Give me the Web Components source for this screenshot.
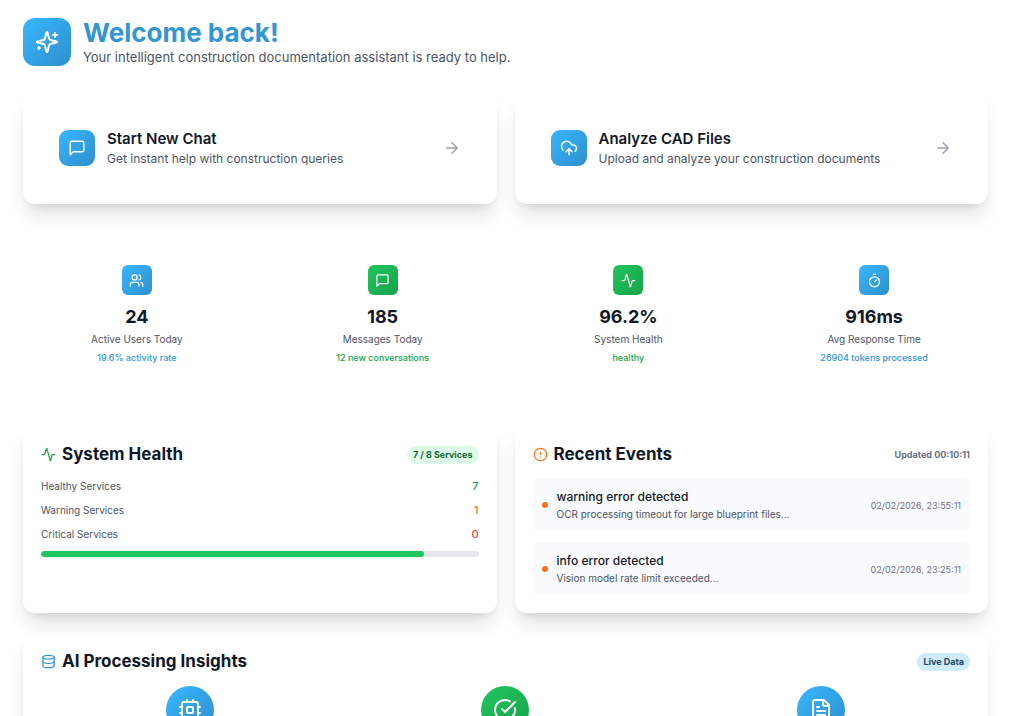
<!DOCTYPE html>
<html lang="en">
<head>
<meta charset="utf-8">
<meta name="viewport" content="width=device-width, initial-scale=1">
<title>Dashboard</title>
<style>
:root {
  --blue-a: #38b6ff; --blue-b: #2e8fcb; --blue: #3296d2;
  --green-a: #22c55e; --green-b: #16a34a;
  --ink: #111827; --muted: #4b5563; --soft: #6b7280; --faint: #9ca3af;
  --orange: #f97316; --red: #ef4444;
}
html { scrollbar-width: none; }
body { margin: 0; background: #fff; color: var(--ink); font-family: Inter, "Liberation Sans", sans-serif; }
</style>
</head>
<body>
<dashboard-page></dashboard-page>
<script>
const ICONS = {
  sparkles: '<path d="M9.937 15.5A2 2 0 0 0 8.5 14.063l-6.135-1.582a.5.5 0 0 1 0-.962L8.5 9.936A2 2 0 0 0 9.937 8.5l1.582-6.135a.5.5 0 0 1 .963 0L14.063 8.5A2 2 0 0 0 15.5 9.937l6.135 1.581a.5.5 0 0 1 0 .964L15.5 14.063a2 2 0 0 0-1.437 1.437l-1.582 6.135a.5.5 0 0 1-.963 0z"/><path d="M20 3v4M22 5h-4M4 17v2M5 18H3"/>',
  message: '<path d="M21 15a2 2 0 0 1-2 2H7l-4 4V5a2 2 0 0 1 2-2h14a2 2 0 0 1 2 2z"/>',
  upload: '<path d="M12 13v8"/><path d="M4 14.899A7 7 0 1 1 15.710 8h1.790a4.500 4.500 0 0 1 2.500 8.242"/><path d="m8 17 4-4 4 4"/>',
  arrow: '<path d="M5 12h14M12 5l7 7-7 7"/>',
  users: '<path d="M16 21v-2a4 4 0 0 0-4-4H6a4 4 0 0 0-4 4v2"/><circle cx="9" cy="7" r="4"/><path d="M22 21v-2a4 4 0 0 0-3-3.870M16 3.130a4 4 0 0 1 0 7.750"/>',
  activity: '<path d="M22 12h-2.480a2 2 0 0 0-1.930 1.460l-2.350 8.360a.25.25 0 0 1-.48 0L9.240 2.180a.25.25 0 0 0-.48 0l-2.350 8.360A2 2 0 0 1 4.490 12H2"/>',
  timer: '<path d="M10 2h4M12 14l3-3"/><circle cx="12" cy="14" r="8"/>',
  alert: '<circle cx="12" cy="12" r="10"/><path d="M12 8v4M12 16h.01"/>',
  database: '<ellipse cx="12" cy="5" rx="9" ry="3"/><path d="M3 5v14a9 3 0 0 0 18 0V5"/><path d="M3 12a9 3 0 0 0 18 0"/>',
  cpu: '<rect x="4" y="4" width="16" height="16" rx="2"/><rect x="9" y="9" width="6" height="6" rx="1"/><path d="M15 2v2M15 20v2M2 15h2M2 9h2M20 15h2M20 9h2M9 2v2M9 20v2"/>',
  check: '<path d="M21.801 10A10 10 0 1 1 17 3.335"/><path d="m9 11 3 3L22 4"/>',
  file: '<path d="M15 2H6a2 2 0 0 0-2 2v16a2 2 0 0 0 2 2h12a2 2 0 0 0 2-2V7Z"/><path d="M14 2v4a2 2 0 0 0 2 2h4M10 9H8M16 13H8M16 17H8"/>'
};

class Base extends HTMLElement {
  connectedCallback() {
    if (this.shadowRoot) return;
    this.attachShadow({ mode: 'open' }).innerHTML =
      '<style>*{box-sizing:border-box}:host{box-sizing:border-box}' + this.css() + '</style>' + this.html();
  }
  at(name) { return this.getAttribute(name) || ''; }
}

customElements.define('ui-icon', class extends Base {
  css() { return `:host{display:block;flex:none;width:var(--icon,18px);height:var(--icon,18px)}svg{display:block;width:100%;height:100%}`; }
  html() { return `<svg viewBox="0 0 24 24" fill="none" stroke="currentColor" stroke-width="2" stroke-linecap="round" stroke-linejoin="round" aria-hidden="true">${ICONS[this.at('name')]}</svg>`; }
});

customElements.define('icon-tile', class extends Base {
  css() { return `
    :host{display:grid;place-items:center;flex:none;width:var(--tile,36px);height:var(--tile,36px);border-radius:var(--tile-radius,9px);
      color:#fff;background:linear-gradient(135deg,var(--blue-a),var(--blue-b))}
    :host([tone=green]){background:linear-gradient(135deg,var(--green-a),var(--green-b))}`; }
  html() { return `<ui-icon name="${this.at('icon')}"></ui-icon>`; }
});

customElements.define('page-header', class extends Base {
  css() { return `
    :host{display:flex;align-items:center;gap:12px}
    icon-tile{--tile:48px;--tile-radius:12px;--icon:24px}
    h1{margin:0;font-size:26px;line-height:30px;font-weight:700;color:var(--blue)}
    p{margin:0;font-size:13px;line-height:18px;color:var(--muted)}`; }
  html() { return `<icon-tile icon="sparkles"></icon-tile><div><h1><slot name="title"></slot></h1><p><slot></slot></p></div>`; }
});

customElements.define('ui-card', class extends Base {
  css() { return `
    :host{display:block;padding:18px;border-radius:12px;background:#fff;
      box-shadow:0 15px 19px -4px rgb(0 0 0/.1),0 6px 8px -5px rgb(0 0 0/.1),0 12px 24px rgb(0 0 0/.02)}`; }
  html() { return `<slot></slot>`; }
});

customElements.define('action-card', class extends Base {
  css() { return `
    :host{display:block}
    a{display:flex;align-items:center;gap:12px;padding:18px;color:inherit;text-decoration:none}
    div{flex:1;min-width:0}
    h2{margin:0;font-size:15px;line-height:21px;font-weight:600}
    p{margin:0;font-size:12px;line-height:19px;color:var(--muted)}
    ui-icon{color:var(--faint)}`; }
  html() { return `<ui-card><a href="${this.at('href')}"><icon-tile icon="${this.at('icon')}"></icon-tile>
    <div><h2><slot name="title"></slot></h2><p><slot></slot></p></div><ui-icon name="arrow"></ui-icon></a></ui-card>`; }
});

customElements.define('stat-tile', class extends Base {
  css() { return `
    :host{display:flex;flex-direction:column;align-items:center;text-align:center;padding:36px 18px}
    icon-tile{--tile:30px;--tile-radius:6px;--icon:15px;margin-bottom:9px}
    strong{font-size:18px;line-height:26px;font-weight:700}
    span{font-size:10px;line-height:18px;color:var(--muted)}
    small{font-size:9px;line-height:20px;font-weight:500;color:var(--blue)}
    :host([tone=green]) small{color:var(--green-b)}`; }
  html() { return `<icon-tile icon="${this.at('icon')}" tone="${this.at('tone')}"></icon-tile>
    <strong>${this.at('value')}</strong><span>${this.at('label')}</span><small><slot></slot></small>`; }
});

customElements.define('card-header', class extends Base {
  css() { return `
    :host{display:flex;align-items:center;gap:6px;height:25px;margin-bottom:12px}
    ui-icon{--icon:15px}
    h2{margin:0;flex:1;font-size:17px;line-height:25px;font-weight:700}`; }
  html() { return `<ui-icon name="${this.at('icon')}" style="color:var(--${this.at('color')})"></ui-icon><h2><slot></slot></h2><slot name="aside"></slot>`; }
});

customElements.define('ui-badge', class extends Base {
  css() { return `
    :host{display:block;padding:0 6px;border-radius:9px;font-size:9px;line-height:18px;font-weight:700;background:#d0ebff;color:#1b4965}
    :host([tone=green]){background:#dcfce7;color:#166534}
    :host([tone=plain]){padding:0;background:none;color:var(--soft)}`; }
  html() { return `<slot></slot>`; }
});

customElements.define('service-list', class extends Base {
  css() { return `
    :host{display:block}
    dl{display:grid;gap:9px;margin:0 0 9px}
    div.row{display:flex;justify-content:space-between;font-size:10px;line-height:15px}
    dt{color:var(--muted)}
    dd{margin:0;font-size:11px;font-weight:500}
    .ok{color:var(--green-b)}.warn{color:var(--orange)}.bad{color:var(--red)}
    .track{height:6px;border-radius:3px;background:#e5e7eb;overflow:hidden}
    .bar{width:87.5%;height:100%;border-radius:3px;background:var(--green-a)}`; }
  html() { return `<dl>
    <div class="row"><dt>Healthy Services</dt><dd class="ok">7</dd></div>
    <div class="row"><dt>Warning Services</dt><dd class="warn">1</dd></div>
    <div class="row"><dt>Critical Services</dt><dd class="bad">0</dd></div></dl>
    <div class="track" role="progressbar" aria-label="Healthy services" aria-valuenow="7" aria-valuemax="8"><div class="bar"></div></div>`; }
});

customElements.define('event-item', class extends Base {
  css() { return `
    :host{display:flex;align-items:center;gap:9px;height:52px;padding:0 9px;border-radius:6px;background:#f9fafb}
    i{flex:none;width:6px;height:6px;border-radius:50%;background:var(--orange)}
    div{flex:1;min-width:0}
    h3{margin:0;font-size:12px;line-height:18px;font-weight:500}
    p{margin:0;font-size:10px;line-height:17px;color:var(--muted)}
    time{font-size:9px;color:var(--soft)}`; }
  html() { return `<i></i><div><h3>${this.at('heading')}</h3><p><slot></slot></p></div><time>${this.at('time')}</time>`; }
});

customElements.define('dashboard-page', class extends Base {
  css() { return `
    :host{display:block;padding:18px 36px 24px 23px}
    page-header{margin-bottom:26px}
    .two,.four,.three{display:grid;gap:18px}
    .two{grid-template-columns:repeat(2,minmax(0,1fr))}
    .three{grid-template-columns:repeat(3,minmax(0,1fr));justify-items:center}
    .four{grid-template-columns:repeat(4,minmax(0,1fr));margin:25px 0 20px}
    .events{display:grid;gap:12px}
    .insights{margin-top:18px}
    .three icon-tile{--tile:48px;--tile-radius:50%;--icon:24px}`; }
  html() { return `
    <page-header><span slot="title">Welcome back!</span>Your intelligent construction documentation assistant is ready to help.</page-header>
    <div class="two">
      <action-card icon="message" href="#chat"><span slot="title">Start New Chat</span>Get instant help with construction queries</action-card>
      <action-card icon="upload" href="#cad"><span slot="title">Analyze CAD Files</span>Upload and analyze your construction documents</action-card>
    </div>
    <div class="four">
      <stat-tile icon="users" value="24" label="Active Users Today">19.6% activity rate</stat-tile>
      <stat-tile icon="message" tone="green" value="185" label="Messages Today">12 new conversations</stat-tile>
      <stat-tile icon="activity" tone="green" value="96.2%" label="System Health">healthy</stat-tile>
      <stat-tile icon="timer" value="916ms" label="Avg Response Time">26904 tokens processed</stat-tile>
    </div>
    <div class="two">
      <ui-card>
        <card-header icon="activity" color="green-b">System Health<ui-badge slot="aside" tone="green">7 / 8 Services</ui-badge></card-header>
        <service-list></service-list>
      </ui-card>
      <ui-card>
        <card-header icon="alert" color="orange">Recent Events<ui-badge slot="aside" tone="plain">Updated 00:10:11</ui-badge></card-header>
        <div class="events">
          <event-item heading="warning error detected" time="02/02/2026, 23:55:11">OCR processing timeout for large blueprint files...</event-item>
          <event-item heading="info error detected" time="02/02/2026, 23:25:11">Vision model rate limit exceeded...</event-item>
        </div>
      </ui-card>
    </div>
    <ui-card class="insights">
      <card-header icon="database" color="blue">AI Processing Insights<ui-badge slot="aside">Live Data</ui-badge></card-header>
      <div class="three">
        <icon-tile icon="cpu"></icon-tile><icon-tile icon="check" tone="green"></icon-tile><icon-tile icon="file"></icon-tile>
      </div>
    </ui-card>`; }
});
</script>
</body>
</html>
